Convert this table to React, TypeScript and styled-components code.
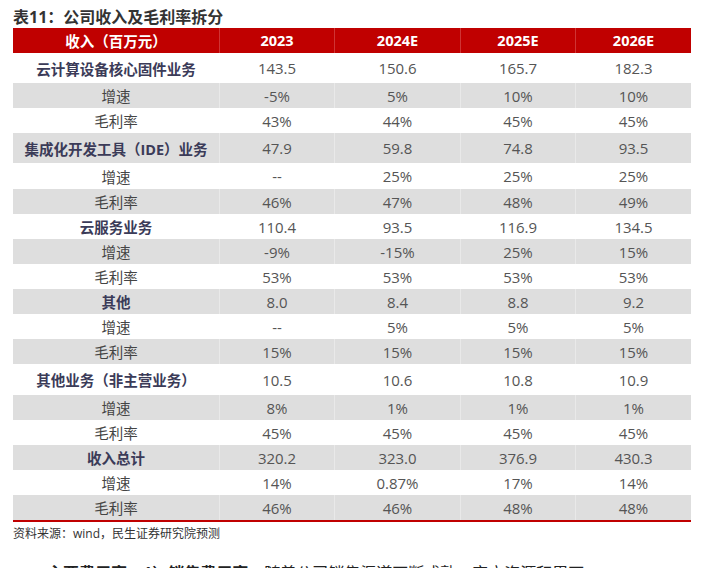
import React from 'react';
import styled, { createGlobalStyle } from 'styled-components';

const GlobalStyle = createGlobalStyle`
  html, body {
    margin: 0;
    padding: 0;
    background: #ffffff;
    overflow: hidden;
  }
  body {
    font-family: "Open Sans", "Noto Sans CJK SC", sans-serif;
  }
`;

const Page = styled.div`
  width: 707px;
  height: 568px;
  padding: 7px 0 0 13px;
  box-sizing: border-box;
`;

const Title = styled.h2`
  margin: 0;
  height: 21px;
  font-size: 16px;
  line-height: 21px;
  font-weight: 700;
  color: #333333;
  font-family: "Open Sans", "Noto Sans CJK SC", sans-serif;
`;

const Table = styled.div`
  width: 678px;
  border-bottom: 2px solid #c00000;
`;

const Row = styled.div<{ $h: number; $alt?: boolean }>`
  display: grid;
  grid-template-columns: 207px 115px 126px 115px 115px;
  height: ${(p) => p.$h}px;
  background: ${(p) => (p.$alt ? '#dedede' : '#ffffff')};
`;

const HeadRow = styled(Row)`
  background: #c00000;
`;

const Cell = styled.div<{ $kind?: 'head' | 'group' | 'sub' | 'num' }>`
  display: flex;
  align-items: center;
  justify-content: center;
  font-size: ${(p) => (p.$kind === 'num' ? '15px' : '14.5px')};
  font-weight: ${(p) => (p.$kind === 'head' || p.$kind === 'group' ? 700 : 400)};
  color: ${(p) =>
    p.$kind === 'head'
      ? '#ffffff'
      : p.$kind === 'group'
      ? '#3b3b58'
      : p.$kind === 'sub'
      ? '#444444'
      : '#555555'};
  border-right: 1px solid
    ${(p) => (p.$kind === 'head' ? '#cf3434' : 'rgba(255, 255, 255, 0.35)')};
  white-space: nowrap;

  &:last-child {
    border-right: none;
  }
`;

const Source = styled.p`
  margin: 4px 0 0;
  font-size: 12px;
  line-height: 16px;
  color: #333333;
`;

const Para = styled.p`
  margin: 19px 0 0;
  padding-left: 34px;
  font-size: 16px;
  line-height: 24px;
  color: #222222;
  white-space: nowrap;

  strong {
    font-weight: 700;
  }
`;

type Line = { label: string; group?: boolean; h?: number; values: string[] };

const lines: Line[] = [
  { label: '云计算设备核心固件业务', group: true, h: 30, values: ['143.5', '150.6', '165.7', '182.3'] },
  { label: '增速', values: ['-5%', '5%', '10%', '10%'] },
  { label: '毛利率', values: ['43%', '44%', '45%', '45%'] },
  { label: '集成化开发工具（IDE）业务', group: true, h: 30, values: ['47.9', '59.8', '74.8', '93.5'] },
  { label: '增速', h: 26, values: ['--', '25%', '25%', '25%'] },
  { label: '毛利率', values: ['46%', '47%', '48%', '49%'] },
  { label: '云服务业务', group: true, values: ['110.4', '93.5', '116.9', '134.5'] },
  { label: '增速', values: ['-9%', '-15%', '25%', '15%'] },
  { label: '毛利率', values: ['53%', '53%', '53%', '53%'] },
  { label: '其他', group: true, values: ['8.0', '8.4', '8.8', '9.2'] },
  { label: '增速', values: ['--', '5%', '5%', '5%'] },
  { label: '毛利率', values: ['15%', '15%', '15%', '15%'] },
  { label: '其他业务（非主营业务）', group: true, h: 31, values: ['10.5', '10.6', '10.8', '10.9'] },
  { label: '增速', values: ['8%', '1%', '1%', '1%'] },
  { label: '毛利率', values: ['45%', '45%', '45%', '45%'] },
  { label: '收入总计', group: true, values: ['320.2', '323.0', '376.9', '430.3'] },
  { label: '增速', values: ['14%', '0.87%', '17%', '14%'] },
  { label: '毛利率', values: ['46%', '46%', '48%', '48%'] },
];

const years = ['2023', '2024E', '2025E', '2026E'];

export default function App() {
  return (
    <Page>
      <GlobalStyle />
      <Title>表11：公司收入及毛利率拆分</Title>
      <Table>
        <HeadRow $h={25}>
          <Cell $kind="head">收入（百万元）</Cell>
          {years.map((y) => (
            <Cell key={y} $kind="head">{y}</Cell>
          ))}
        </HeadRow>
        {lines.map((l, i) => (
          <Row key={i} $h={l.h ?? 25} $alt={i % 2 === 1}>
            <Cell $kind={l.group ? 'group' : 'sub'}>{l.label}</Cell>
            {l.values.map((v, j) => (
              <Cell key={j} $kind="num">{v}</Cell>
            ))}
          </Row>
        ))}
      </Table>
      <Source>资料来源：wind，民生证券研究院预测</Source>
      <Para>
        <strong>主要费用率：1）销售费用率：</strong>随着公司销售渠道不断成熟，客户资源积累不
      </Para>
    </Page>
  );
}
